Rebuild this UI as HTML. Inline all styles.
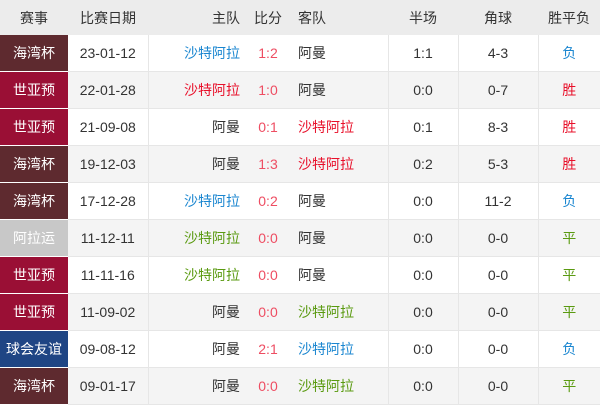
<!DOCTYPE html>
<html><head><meta charset="utf-8"><style>
body{margin:0;width:600px;height:400px;overflow:hidden;background:#fff;font-family:"Liberation Sans","Noto Sans CJK SC",sans-serif;font-size:14px;color:#333}
table{border-collapse:collapse;table-layout:fixed;width:600px}
th{height:35px;background:#ececec;font-weight:normal;color:#333;padding:0;font-size:14px}
td{height:36px;border-bottom:1px solid #e6e6e6;padding:0;text-align:center;background:#fff}
tr:nth-child(odd) td{background:#f4f4f4}
td.c{color:#fff;border-bottom:1px solid #fff}
.b1{border-right:1px solid #e6e6e6}
.h{text-align:right;padding-right:10px}
.a{text-align:left;padding-left:12px}
.bl{color:#1a86d0}.rd{color:#e8102a}.gr{color:#5a9a10}.sc{color:#ee4d62}
.k1{background:#5e2a2f!important}.k2{background:#9a0f35!important}.k3{background:#c8c8c8!important}.k4{background:#1f4584!important}
</style></head><body>
<table>
<colgroup><col style="width:68px"><col style="width:80px"><col style="width:102px"><col style="width:36px"><col style="width:102px"><col style="width:70px"><col style="width:80px"><col style="width:62px"></colgroup>
<tr><th>赛事</th><th>比赛日期</th><th class="h">主队</th><th>比分</th><th class="a">客队</th><th>半场</th><th>角球</th><th>胜平负</th></tr>
<tr><td class="c k1">海湾杯</td><td class="b1">23-01-12</td><td class="h bl">沙特阿拉</td><td class="sc">1:2</td><td class="a b1">阿曼</td><td class="b1">1:1</td><td class="b1">4-3</td><td class="bl">负</td></tr>
<tr><td class="c k2">世亚预</td><td class="b1">22-01-28</td><td class="h rd">沙特阿拉</td><td class="sc">1:0</td><td class="a b1">阿曼</td><td class="b1">0:0</td><td class="b1">0-7</td><td class="rd">胜</td></tr>
<tr><td class="c k2">世亚预</td><td class="b1">21-09-08</td><td class="h">阿曼</td><td class="sc">0:1</td><td class="a b1 rd">沙特阿拉</td><td class="b1">0:1</td><td class="b1">8-3</td><td class="rd">胜</td></tr>
<tr><td class="c k1">海湾杯</td><td class="b1">19-12-03</td><td class="h">阿曼</td><td class="sc">1:3</td><td class="a b1 rd">沙特阿拉</td><td class="b1">0:2</td><td class="b1">5-3</td><td class="rd">胜</td></tr>
<tr><td class="c k1">海湾杯</td><td class="b1">17-12-28</td><td class="h bl">沙特阿拉</td><td class="sc">0:2</td><td class="a b1">阿曼</td><td class="b1">0:0</td><td class="b1">11-2</td><td class="bl">负</td></tr>
<tr><td class="c k3">阿拉运</td><td class="b1">11-12-11</td><td class="h gr">沙特阿拉</td><td class="sc">0:0</td><td class="a b1">阿曼</td><td class="b1">0:0</td><td class="b1">0-0</td><td class="gr">平</td></tr>
<tr><td class="c k2">世亚预</td><td class="b1">11-11-16</td><td class="h gr">沙特阿拉</td><td class="sc">0:0</td><td class="a b1">阿曼</td><td class="b1">0:0</td><td class="b1">0-0</td><td class="gr">平</td></tr>
<tr><td class="c k2">世亚预</td><td class="b1">11-09-02</td><td class="h">阿曼</td><td class="sc">0:0</td><td class="a b1 gr">沙特阿拉</td><td class="b1">0:0</td><td class="b1">0-0</td><td class="gr">平</td></tr>
<tr><td class="c k4">球会友谊</td><td class="b1">09-08-12</td><td class="h">阿曼</td><td class="sc">2:1</td><td class="a b1 bl">沙特阿拉</td><td class="b1">0:0</td><td class="b1">0-0</td><td class="bl">负</td></tr>
<tr><td class="c k1">海湾杯</td><td class="b1">09-01-17</td><td class="h">阿曼</td><td class="sc">0:0</td><td class="a b1 gr">沙特阿拉</td><td class="b1">0:0</td><td class="b1">0-0</td><td class="gr">平</td></tr>
</table>
</body></html>
